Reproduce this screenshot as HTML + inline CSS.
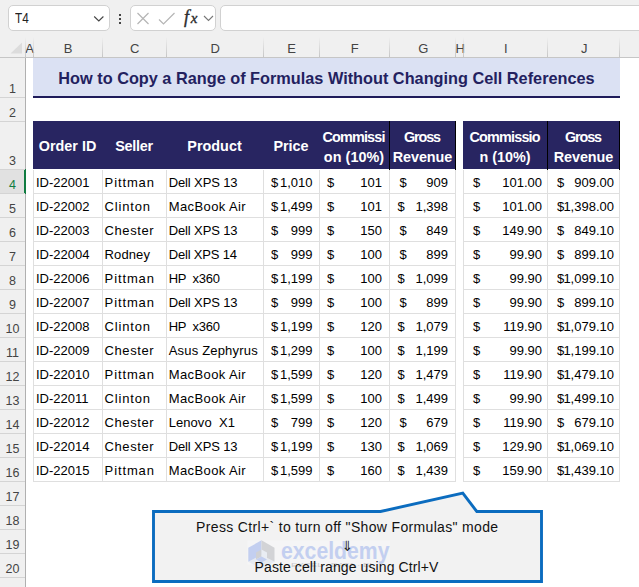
<!DOCTYPE html><html><head><meta charset="utf-8"><title>Excel</title><style>

html,body{margin:0;padding:0;}
body{width:639px;height:587px;overflow:hidden;background:#fff;position:relative;font-family:"Liberation Sans", sans-serif;color:#000;}
div,span{position:absolute;box-sizing:border-box;white-space:pre;}
.t{font-size:13px;line-height:16px;height:16px;color:#000;}
.h{font-size:14.4px;line-height:18px;height:18px;color:#fff;font-weight:bold;text-align:center;}
.ch{font-size:13px;line-height:16px;height:16px;color:#444;text-align:center;top:41px;}
.rh{font-size:12.5px;line-height:14px;height:14px;color:#444;text-align:center;left:0;width:25px;}
.rl{left:0;width:25px;height:1px;background:#d4d4d4;}
.vl{width:1px;background:#dfdfdf;}
.hl{height:1px;background:#dfdfdf;}
.r{text-align:right;}

</style></head><body>
<div style="left:0;top:0;width:639px;height:58px;background:#f0f0f0"></div>
<div style="left:8px;top:5px;width:102px;height:26px;background:#fff;border:1px solid #d1d1d1;border-radius:5px"></div>
<span style="left:15px;top:10px;font-size:14px;line-height:16px;color:#222;transform:scaleX(0.84);transform-origin:0 0">T4</span>
<svg style="position:absolute;left:93px;top:15px" width="12" height="8" viewBox="0 0 12 8"><path d="M1.2 1.5 L5.8 6 L10.4 1.5" fill="none" stroke="#444" stroke-width="1.1"/></svg>
<div style="left:119px;top:14px;width:2px;height:2px;background:#444"></div>
<div style="left:119px;top:18px;width:2px;height:2px;background:#444"></div>
<div style="left:119px;top:22px;width:2px;height:2px;background:#444"></div>
<div style="left:130px;top:5px;width:86px;height:26px;background:#fff;border:1px solid #d1d1d1;border-radius:5px"></div>
<svg style="position:absolute;left:136px;top:12px" width="14" height="13" viewBox="0 0 14 13"><path d="M1.5 1 L12.5 12 M12.5 1 L1.5 12" fill="none" stroke="#b5b5b5" stroke-width="1.2"/></svg>
<svg style="position:absolute;left:158px;top:12px" width="18" height="13" viewBox="0 0 18 13"><path d="M1 7.5 L5.5 12 L16.5 1" fill="none" stroke="#b5b5b5" stroke-width="1.2"/></svg>
<span style="left:184px;top:7px;font-family:'Liberation Serif',serif;font-style:italic;font-size:18px;line-height:20px;color:#2b2b2b;-webkit-text-stroke:0.35px #2b2b2b;letter-spacing:1.8px">f<span style="position:static;font-size:15px">x</span></span>
<svg style="position:absolute;left:203px;top:15px" width="11" height="7" viewBox="0 0 11 7"><path d="M1 1 L5.5 5.5 L10 1" fill="none" stroke="#777" stroke-width="1.1"/></svg>
<div style="left:220px;top:5px;width:430px;height:26px;background:#fff;border:1px solid #d1d1d1;border-radius:5px"></div>
<div style="left:0;top:57px;width:639px;height:1px;background:#c6c6c6"></div>
<svg style="position:absolute;left:10px;top:42px" width="13" height="12" viewBox="0 0 13 12"><path d="M12 0.5 L12 11.5 L0.5 11.5 Z" fill="#dcdcdc"/></svg>
<span class="ch" style="left:21.7px;width:16px">A</span>
<span class="ch" style="left:33.7px;width:69px">B</span>
<span class="ch" style="left:102.7px;width:64px">C</span>
<span class="ch" style="left:166.7px;width:97px">D</span>
<span class="ch" style="left:263.7px;width:56px">E</span>
<span class="ch" style="left:319.7px;width:70px">F</span>
<span class="ch" style="left:389.7px;width:67px">G</span>
<span class="ch" style="left:452.7px;width:15px">H</span>
<span class="ch" style="left:463.7px;width:84px">I</span>
<span class="ch" style="left:547.7px;width:73px">J</span>
<div class="vl" style="left:25px;top:37px;height:20px;background:linear-gradient(to bottom,rgba(200,200,200,0),#c6c6c6)"></div>
<div class="vl" style="left:33px;top:37px;height:20px;background:linear-gradient(to bottom,rgba(200,200,200,0),#c6c6c6)"></div>
<div class="vl" style="left:102px;top:37px;height:20px;background:linear-gradient(to bottom,rgba(200,200,200,0),#c6c6c6)"></div>
<div class="vl" style="left:166px;top:37px;height:20px;background:linear-gradient(to bottom,rgba(200,200,200,0),#c6c6c6)"></div>
<div class="vl" style="left:263px;top:37px;height:20px;background:linear-gradient(to bottom,rgba(200,200,200,0),#c6c6c6)"></div>
<div class="vl" style="left:319px;top:37px;height:20px;background:linear-gradient(to bottom,rgba(200,200,200,0),#c6c6c6)"></div>
<div class="vl" style="left:389px;top:37px;height:20px;background:linear-gradient(to bottom,rgba(200,200,200,0),#c6c6c6)"></div>
<div class="vl" style="left:455px;top:37px;height:20px;background:linear-gradient(to bottom,rgba(200,200,200,0),#c6c6c6)"></div>
<div class="vl" style="left:463px;top:37px;height:20px;background:linear-gradient(to bottom,rgba(200,200,200,0),#c6c6c6)"></div>
<div class="vl" style="left:547px;top:37px;height:20px;background:linear-gradient(to bottom,rgba(200,200,200,0),#c6c6c6)"></div>
<div class="vl" style="left:619px;top:37px;height:20px;background:linear-gradient(to bottom,rgba(200,200,200,0),#c6c6c6)"></div>
<div style="left:0;top:58px;width:25px;height:529px;background:#f0f0f0"></div>
<div style="left:25px;top:58px;width:1px;height:529px;background:#b0b0b0"></div>
<div style="left:0;top:169px;width:24px;height:25px;background:#e1e1e1"></div>
<div style="left:24px;top:169px;width:2px;height:25px;background:#107c41"></div>
<span class="rh" style="top:82px;color:#444">1</span>
<div class="rl" style="top:97px"></div>
<span class="rh" style="top:106px;color:#444">2</span>
<div class="rl" style="top:121px"></div>
<span class="rh" style="top:154px;color:#444">3</span>
<div class="rl" style="top:169px"></div>
<span class="rh" style="top:178px;color:#107c41">4</span>
<div class="rl" style="top:193px"></div>
<span class="rh" style="top:202px;color:#444">5</span>
<div class="rl" style="top:217px"></div>
<span class="rh" style="top:226px;color:#444">6</span>
<div class="rl" style="top:241px"></div>
<span class="rh" style="top:250px;color:#444">7</span>
<div class="rl" style="top:265px"></div>
<span class="rh" style="top:274px;color:#444">8</span>
<div class="rl" style="top:289px"></div>
<span class="rh" style="top:298px;color:#444">9</span>
<div class="rl" style="top:313px"></div>
<span class="rh" style="top:322px;color:#444">10</span>
<div class="rl" style="top:337px"></div>
<span class="rh" style="top:346px;color:#444">11</span>
<div class="rl" style="top:361px"></div>
<span class="rh" style="top:370px;color:#444">12</span>
<div class="rl" style="top:385px"></div>
<span class="rh" style="top:394px;color:#444">13</span>
<div class="rl" style="top:409px"></div>
<span class="rh" style="top:418px;color:#444">14</span>
<div class="rl" style="top:433px"></div>
<span class="rh" style="top:442px;color:#444">15</span>
<div class="rl" style="top:457px"></div>
<span class="rh" style="top:466px;color:#444">16</span>
<div class="rl" style="top:481px"></div>
<span class="rh" style="top:490px;color:#444">17</span>
<div class="rl" style="top:505px"></div>
<span class="rh" style="top:514px;color:#444">18</span>
<div class="rl" style="top:529px"></div>
<span class="rh" style="top:538px;color:#444">19</span>
<div class="rl" style="top:553px"></div>
<span class="rh" style="top:562px;color:#444">20</span>
<div class="rl" style="top:577px"></div>
<span class="rh" style="top:586px;color:#444">21</span>
<div class="rl" style="top:601px"></div>
<div style="left:33px;top:58px;width:587px;height:40px;background:#dbe1f3;border-bottom:2px solid #1e1b5a"></div>
<span style="left:33px;top:67px;width:587px;text-align:center;font-weight:bold;font-size:16.3px;line-height:22px;color:#23215f">How to Copy a Range of Formulas Without Changing Cell References</span>
<div style="left:33px;top:121px;width:423px;height:48px;background:#282561"></div>
<div style="left:463px;top:121px;width:157px;height:48px;background:#282561"></div>
<div style="left:389px;top:121px;width:1px;height:49px;background:#000"></div>
<div style="left:455px;top:121px;width:1px;height:49px;background:#000"></div>
<div style="left:547px;top:121px;width:1px;height:49px;background:#000"></div>
<div style="left:619px;top:121px;width:1px;height:49px;background:#000"></div>
<span class="h" style="left:33px;width:69px;top:137px">Order ID</span>
<span class="h" style="left:102px;width:64px;top:137px;letter-spacing:-0.30px">Seller</span>
<span class="h" style="left:166px;width:97px;top:137px">Product</span>
<span class="h" style="left:263px;width:56px;top:137px">Price</span>
<span class="h" style="left:313.57px;width:80px;top:128px;letter-spacing:-0.85px">Commissi</span>
<span class="h" style="left:314.02px;width:80px;top:148px;letter-spacing:0.05px">on (10%)</span>
<span class="h" style="left:383.45px;width:77px;top:128px;letter-spacing:-1.10px">Gross</span>
<span class="h" style="left:383.95px;width:77px;top:148px;letter-spacing:-0.10px">Revenue</span>
<span class="h" style="left:457.60px;width:94px;top:128px;letter-spacing:-0.80px">Commissio</span>
<span class="h" style="left:458.00px;width:94px;top:148px">n (10%)</span>
<span class="h" style="left:541.45px;width:83px;top:128px;letter-spacing:-1.10px">Gross</span>
<span class="h" style="left:541.95px;width:83px;top:148px;letter-spacing:-0.10px">Revenue</span>
<div class="hl" style="left:33px;top:193px;width:423px"></div>
<div class="hl" style="left:33px;top:217px;width:423px"></div>
<div class="hl" style="left:33px;top:241px;width:423px"></div>
<div class="hl" style="left:33px;top:265px;width:423px"></div>
<div class="hl" style="left:33px;top:289px;width:423px"></div>
<div class="hl" style="left:33px;top:313px;width:423px"></div>
<div class="hl" style="left:33px;top:337px;width:423px"></div>
<div class="hl" style="left:33px;top:361px;width:423px"></div>
<div class="hl" style="left:33px;top:385px;width:423px"></div>
<div class="hl" style="left:33px;top:409px;width:423px"></div>
<div class="hl" style="left:33px;top:433px;width:423px"></div>
<div class="hl" style="left:33px;top:457px;width:423px"></div>
<div class="hl" style="left:33px;top:481px;width:423px"></div>
<div class="hl" style="left:463px;top:193px;width:157px"></div>
<div class="hl" style="left:463px;top:217px;width:157px"></div>
<div class="hl" style="left:463px;top:241px;width:157px"></div>
<div class="hl" style="left:463px;top:265px;width:157px"></div>
<div class="hl" style="left:463px;top:289px;width:157px"></div>
<div class="hl" style="left:463px;top:313px;width:157px"></div>
<div class="hl" style="left:463px;top:337px;width:157px"></div>
<div class="hl" style="left:463px;top:361px;width:157px"></div>
<div class="hl" style="left:463px;top:385px;width:157px"></div>
<div class="hl" style="left:463px;top:409px;width:157px"></div>
<div class="hl" style="left:463px;top:433px;width:157px"></div>
<div class="hl" style="left:463px;top:457px;width:157px"></div>
<div class="hl" style="left:463px;top:481px;width:157px"></div>
<div class="vl" style="left:33px;top:170px;height:312px"></div>
<div class="vl" style="left:102px;top:170px;height:312px"></div>
<div class="vl" style="left:166px;top:170px;height:312px"></div>
<div class="vl" style="left:263px;top:170px;height:312px"></div>
<div class="vl" style="left:319px;top:170px;height:312px"></div>
<div class="vl" style="left:389px;top:170px;height:312px"></div>
<div class="vl" style="left:455px;top:170px;height:312px"></div>
<div class="vl" style="left:463px;top:170px;height:312px"></div>
<div class="vl" style="left:547px;top:170px;height:312px"></div>
<div class="vl" style="left:619px;top:170px;height:312px"></div>
<span class="t" style="left:36px;top:175px">ID-22001</span>
<span class="t" style="left:104.6px;top:175px;letter-spacing:0.88px">Pittman</span>
<span class="t" style="left:168.7px;top:175px;letter-spacing:-0.12px">Dell XPS 13</span>
<span class="t" style="left:271.0px;top:175px">$</span>
<span class="t r" style="left:232.5px;width:80px;top:175px">1,010</span>
<span class="t" style="left:327.0px;top:175px">$</span>
<span class="t r" style="left:302.0px;width:80px;top:175px">101</span>
<span class="t" style="left:399.4px;top:175px">$</span>
<span class="t r" style="left:368.0px;width:80px;top:175px">909</span>
<span class="t" style="left:473.0px;top:175px">$</span>
<span class="t r" style="left:462.0px;width:80px;top:175px">101.00</span>
<span class="t" style="left:557.0px;top:175px">$</span>
<span class="t r" style="left:534.0px;width:80px;top:175px">909.00</span>
<span class="t" style="left:36px;top:199px">ID-22002</span>
<span class="t" style="left:104.6px;top:199px;letter-spacing:0.82px">Clinton</span>
<span class="t" style="left:168.7px;top:199px;letter-spacing:0.40px">MacBook Air</span>
<span class="t" style="left:271.0px;top:199px">$</span>
<span class="t r" style="left:232.5px;width:80px;top:199px">1,499</span>
<span class="t" style="left:327.0px;top:199px">$</span>
<span class="t r" style="left:302.0px;width:80px;top:199px">101</span>
<span class="t" style="left:397.6px;top:199px">$</span>
<span class="t r" style="left:368.0px;width:80px;top:199px">1,398</span>
<span class="t" style="left:473.0px;top:199px">$</span>
<span class="t r" style="left:462.0px;width:80px;top:199px">101.00</span>
<span class="t" style="left:557.0px;top:199px">$</span>
<span class="t r" style="left:534.0px;width:80px;top:199px">1,398.00</span>
<span class="t" style="left:36px;top:223px">ID-22003</span>
<span class="t" style="left:104.6px;top:223px;letter-spacing:0.57px">Chester</span>
<span class="t" style="left:168.7px;top:223px;letter-spacing:-0.12px">Dell XPS 13</span>
<span class="t" style="left:271.0px;top:223px">$</span>
<span class="t r" style="left:232.5px;width:80px;top:223px">999</span>
<span class="t" style="left:327.0px;top:223px">$</span>
<span class="t r" style="left:302.0px;width:80px;top:223px">150</span>
<span class="t" style="left:399.4px;top:223px">$</span>
<span class="t r" style="left:368.0px;width:80px;top:223px">849</span>
<span class="t" style="left:473.0px;top:223px">$</span>
<span class="t r" style="left:462.0px;width:80px;top:223px">149.90</span>
<span class="t" style="left:557.0px;top:223px">$</span>
<span class="t r" style="left:534.0px;width:80px;top:223px">849.10</span>
<span class="t" style="left:36px;top:247px">ID-22004</span>
<span class="t" style="left:104.6px;top:247px;letter-spacing:0.10px">Rodney</span>
<span class="t" style="left:168.7px;top:247px;letter-spacing:-0.17px">Dell XPS 14</span>
<span class="t" style="left:271.0px;top:247px">$</span>
<span class="t r" style="left:232.5px;width:80px;top:247px">999</span>
<span class="t" style="left:327.0px;top:247px">$</span>
<span class="t r" style="left:302.0px;width:80px;top:247px">100</span>
<span class="t" style="left:399.4px;top:247px">$</span>
<span class="t r" style="left:368.0px;width:80px;top:247px">899</span>
<span class="t" style="left:473.0px;top:247px">$</span>
<span class="t r" style="left:462.0px;width:80px;top:247px">99.90</span>
<span class="t" style="left:557.0px;top:247px">$</span>
<span class="t r" style="left:534.0px;width:80px;top:247px">899.10</span>
<span class="t" style="left:36px;top:271px">ID-22006</span>
<span class="t" style="left:104.6px;top:271px;letter-spacing:0.88px">Pittman</span>
<span class="t" style="left:168.7px;top:271px;letter-spacing:-0.29px">HP  x360</span>
<span class="t" style="left:271.0px;top:271px">$</span>
<span class="t r" style="left:232.5px;width:80px;top:271px">1,199</span>
<span class="t" style="left:327.0px;top:271px">$</span>
<span class="t r" style="left:302.0px;width:80px;top:271px">100</span>
<span class="t" style="left:397.6px;top:271px">$</span>
<span class="t r" style="left:368.0px;width:80px;top:271px">1,099</span>
<span class="t" style="left:473.0px;top:271px">$</span>
<span class="t r" style="left:462.0px;width:80px;top:271px">99.90</span>
<span class="t" style="left:557.0px;top:271px">$</span>
<span class="t r" style="left:534.0px;width:80px;top:271px">1,099.10</span>
<span class="t" style="left:36px;top:295px">ID-22007</span>
<span class="t" style="left:104.6px;top:295px;letter-spacing:0.88px">Pittman</span>
<span class="t" style="left:168.7px;top:295px;letter-spacing:-0.12px">Dell XPS 13</span>
<span class="t" style="left:271.0px;top:295px">$</span>
<span class="t r" style="left:232.5px;width:80px;top:295px">999</span>
<span class="t" style="left:327.0px;top:295px">$</span>
<span class="t r" style="left:302.0px;width:80px;top:295px">100</span>
<span class="t" style="left:399.4px;top:295px">$</span>
<span class="t r" style="left:368.0px;width:80px;top:295px">899</span>
<span class="t" style="left:473.0px;top:295px">$</span>
<span class="t r" style="left:462.0px;width:80px;top:295px">99.90</span>
<span class="t" style="left:557.0px;top:295px">$</span>
<span class="t r" style="left:534.0px;width:80px;top:295px">899.10</span>
<span class="t" style="left:36px;top:319px">ID-22008</span>
<span class="t" style="left:104.6px;top:319px;letter-spacing:0.82px">Clinton</span>
<span class="t" style="left:168.7px;top:319px;letter-spacing:-0.29px">HP  x360</span>
<span class="t" style="left:271.0px;top:319px">$</span>
<span class="t r" style="left:232.5px;width:80px;top:319px">1,199</span>
<span class="t" style="left:327.0px;top:319px">$</span>
<span class="t r" style="left:302.0px;width:80px;top:319px">120</span>
<span class="t" style="left:397.6px;top:319px">$</span>
<span class="t r" style="left:368.0px;width:80px;top:319px">1,079</span>
<span class="t" style="left:473.0px;top:319px">$</span>
<span class="t r" style="left:462.0px;width:80px;top:319px">119.90</span>
<span class="t" style="left:557.0px;top:319px">$</span>
<span class="t r" style="left:534.0px;width:80px;top:319px">1,079.10</span>
<span class="t" style="left:36px;top:343px">ID-22009</span>
<span class="t" style="left:104.6px;top:343px;letter-spacing:0.57px">Chester</span>
<span class="t" style="left:168.7px;top:343px;letter-spacing:0.19px">Asus Zephyrus</span>
<span class="t" style="left:271.0px;top:343px">$</span>
<span class="t r" style="left:232.5px;width:80px;top:343px">1,299</span>
<span class="t" style="left:327.0px;top:343px">$</span>
<span class="t r" style="left:302.0px;width:80px;top:343px">100</span>
<span class="t" style="left:397.6px;top:343px">$</span>
<span class="t r" style="left:368.0px;width:80px;top:343px">1,199</span>
<span class="t" style="left:473.0px;top:343px">$</span>
<span class="t r" style="left:462.0px;width:80px;top:343px">99.90</span>
<span class="t" style="left:557.0px;top:343px">$</span>
<span class="t r" style="left:534.0px;width:80px;top:343px">1,199.10</span>
<span class="t" style="left:36px;top:367px">ID-22010</span>
<span class="t" style="left:104.6px;top:367px;letter-spacing:0.88px">Pittman</span>
<span class="t" style="left:168.7px;top:367px;letter-spacing:0.40px">MacBook Air</span>
<span class="t" style="left:271.0px;top:367px">$</span>
<span class="t r" style="left:232.5px;width:80px;top:367px">1,599</span>
<span class="t" style="left:327.0px;top:367px">$</span>
<span class="t r" style="left:302.0px;width:80px;top:367px">120</span>
<span class="t" style="left:397.6px;top:367px">$</span>
<span class="t r" style="left:368.0px;width:80px;top:367px">1,479</span>
<span class="t" style="left:473.0px;top:367px">$</span>
<span class="t r" style="left:462.0px;width:80px;top:367px">119.90</span>
<span class="t" style="left:557.0px;top:367px">$</span>
<span class="t r" style="left:534.0px;width:80px;top:367px">1,479.10</span>
<span class="t" style="left:36px;top:391px">ID-22011</span>
<span class="t" style="left:104.6px;top:391px;letter-spacing:0.82px">Clinton</span>
<span class="t" style="left:168.7px;top:391px;letter-spacing:0.40px">MacBook Air</span>
<span class="t" style="left:271.0px;top:391px">$</span>
<span class="t r" style="left:232.5px;width:80px;top:391px">1,599</span>
<span class="t" style="left:327.0px;top:391px">$</span>
<span class="t r" style="left:302.0px;width:80px;top:391px">100</span>
<span class="t" style="left:397.6px;top:391px">$</span>
<span class="t r" style="left:368.0px;width:80px;top:391px">1,499</span>
<span class="t" style="left:473.0px;top:391px">$</span>
<span class="t r" style="left:462.0px;width:80px;top:391px">99.90</span>
<span class="t" style="left:557.0px;top:391px">$</span>
<span class="t r" style="left:534.0px;width:80px;top:391px">1,499.10</span>
<span class="t" style="left:36px;top:415px">ID-22012</span>
<span class="t" style="left:104.6px;top:415px;letter-spacing:0.57px">Chester</span>
<span class="t" style="left:168.7px;top:415px;letter-spacing:0.06px">Lenovo  X1</span>
<span class="t" style="left:271.0px;top:415px">$</span>
<span class="t r" style="left:232.5px;width:80px;top:415px">799</span>
<span class="t" style="left:327.0px;top:415px">$</span>
<span class="t r" style="left:302.0px;width:80px;top:415px">120</span>
<span class="t" style="left:399.4px;top:415px">$</span>
<span class="t r" style="left:368.0px;width:80px;top:415px">679</span>
<span class="t" style="left:473.0px;top:415px">$</span>
<span class="t r" style="left:462.0px;width:80px;top:415px">119.90</span>
<span class="t" style="left:557.0px;top:415px">$</span>
<span class="t r" style="left:534.0px;width:80px;top:415px">679.10</span>
<span class="t" style="left:36px;top:439px">ID-22014</span>
<span class="t" style="left:104.6px;top:439px;letter-spacing:0.57px">Chester</span>
<span class="t" style="left:168.7px;top:439px;letter-spacing:-0.12px">Dell XPS 13</span>
<span class="t" style="left:271.0px;top:439px">$</span>
<span class="t r" style="left:232.5px;width:80px;top:439px">1,199</span>
<span class="t" style="left:327.0px;top:439px">$</span>
<span class="t r" style="left:302.0px;width:80px;top:439px">130</span>
<span class="t" style="left:397.6px;top:439px">$</span>
<span class="t r" style="left:368.0px;width:80px;top:439px">1,069</span>
<span class="t" style="left:473.0px;top:439px">$</span>
<span class="t r" style="left:462.0px;width:80px;top:439px">129.90</span>
<span class="t" style="left:557.0px;top:439px">$</span>
<span class="t r" style="left:534.0px;width:80px;top:439px">1,069.10</span>
<span class="t" style="left:36px;top:463px">ID-22015</span>
<span class="t" style="left:104.6px;top:463px;letter-spacing:0.88px">Pittman</span>
<span class="t" style="left:168.7px;top:463px;letter-spacing:0.40px">MacBook Air</span>
<span class="t" style="left:271.0px;top:463px">$</span>
<span class="t r" style="left:232.5px;width:80px;top:463px">1,599</span>
<span class="t" style="left:327.0px;top:463px">$</span>
<span class="t r" style="left:302.0px;width:80px;top:463px">160</span>
<span class="t" style="left:397.6px;top:463px">$</span>
<span class="t r" style="left:368.0px;width:80px;top:463px">1,439</span>
<span class="t" style="left:473.0px;top:463px">$</span>
<span class="t r" style="left:462.0px;width:80px;top:463px">159.90</span>
<span class="t" style="left:557.0px;top:463px">$</span>
<span class="t r" style="left:534.0px;width:80px;top:463px">1,439.10</span>
<svg style="position:absolute;left:140px;top:485px" width="420" height="102" viewBox="140 485 420 102">
<path d="M153.5 511.5 L380.5 511.5 L462.8 493.2 L476.8 511.5 L541.5 511.5 L541.5 581.5 L153.5 581.5 Z" fill="#f2f2f2" stroke="#0b6cbf" stroke-width="2.9" stroke-linejoin="miter"/>
</svg>
<svg style="position:absolute;left:240px;top:532px" width="160" height="48" viewBox="240 532 160 48">
<rect x="247.5" y="540.5" width="142.5" height="24" fill="#f5f5f6"/>
<polygon points="248.3,561.8 261.5,555 274.5,561.8 261.5,569" fill="#e6eaf0"/>
<polygon points="248.3,547.7 261.5,540.3 261.5,555 248.3,561.8" fill="#c3cff0"/>
<polygon points="261.5,540.3 274.5,547.7 274.5,561.8 261.5,555" fill="#d2d3d6"/>
<polygon points="256,552.5 261.5,549.5 261.5,556.5 256,559.5" fill="#d0d1d4"/>
<polygon points="261.5,549.5 267,552.5 267,559.5 261.5,556.5" fill="#e9edf3"/>
<polygon points="256,559.5 261.5,556.5 267,559.5 261.5,562.5" fill="#c3cff0"/>
<text x="281" y="559" font-family="Liberation Sans, sans-serif" font-weight="bold" font-size="23" fill="#c3cff0" textLength="108.5" lengthAdjust="spacingAndGlyphs">exceldemy</text>
<text x="291" y="566.5" font-family="Liberation Sans, sans-serif" font-size="5.5" fill="#c9c9cc" textLength="81" lengthAdjust="spacingAndGlyphs">EXCEL · DATA · BI</text>
</svg>
<span style="left:151.8px;width:391px;top:518px;text-align:center;font-size:14px;letter-spacing:0.34px;line-height:18px;color:#111">Press Ctrl+` to turn off "Show Formulas" mode</span>
<span style="left:152px;width:391px;top:537px;text-align:center;font-family:'DejaVu Sans',sans-serif;font-size:14px;line-height:18px;color:#222">⇓</span>
<span style="left:151px;width:391px;top:558px;text-align:center;font-size:14px;letter-spacing:0.1px;line-height:18px;color:#111">Paste cell range using Ctrl+V</span>
</body></html>
